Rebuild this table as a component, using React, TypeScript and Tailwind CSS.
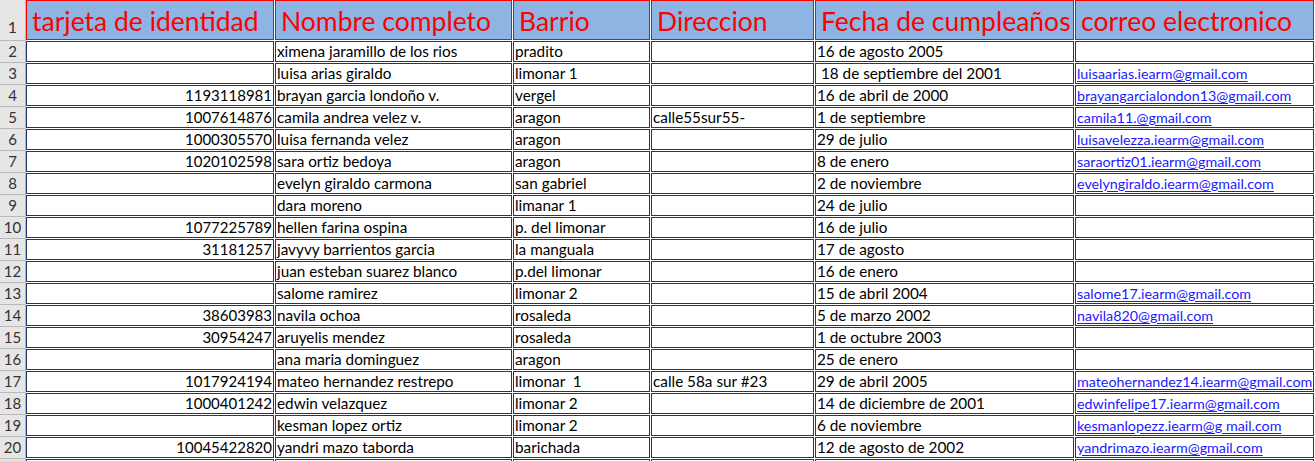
import React from "react";

type Row = [string, string, string, string, string, string];

const rows: Row[] = [
  ["", "ximena jaramillo de los rios", "pradito", "", "16 de agosto 2005", ""],
  ["", "luisa arias giraldo", "limonar 1", "", " 18 de septiembre del 2001", "luisaarias.iearm@gmail.com"],
  ["1193118981", "brayan garcia londoño v.", "vergel", "", "16 de abril de 2000", "brayangarcialondon13@gmail.com"],
  ["1007614876", "camila andrea velez v.", "aragon", "calle55sur55-", "1 de septiembre", "camila11.@gmail.com"],
  ["1000305570", "luisa fernanda velez", "aragon", "", "29 de julio", "luisavelezza.iearm@gmail.com"],
  ["1020102598", "sara ortiz bedoya", "aragon", "", "8 de enero", "saraortiz01.iearm@gmail.com"],
  ["", "evelyn giraldo carmona", "san gabriel", "", "2 de noviembre", "evelyngiraldo.iearm@gmail.com"],
  ["", "dara moreno", "limanar 1", "", "24 de julio", ""],
  ["1077225789", "hellen farina ospina", "p. del limonar", "", "16 de julio", ""],
  ["31181257", "javyvy barrientos garcia", "la manguala", "", "17 de agosto", ""],
  ["", "juan esteban suarez blanco", "p.del limonar", "", "16 de enero", ""],
  ["", "salome ramirez", "limonar 2", "", "15 de abril 2004", "salome17.iearm@gmail.com"],
  ["38603983", "navila ochoa", "rosaleda", "", "5 de marzo 2002", "navila820@gmail.com"],
  ["30954247", "aruyelis mendez", "rosaleda", "", "1 de octubre 2003", ""],
  ["", "ana maria dominguez", "aragon", "", "25 de enero", ""],
  ["1017924194", "mateo hernandez restrepo", "limonar  1", "calle 58a sur #23", "29 de abril 2005", "mateohernandez14.iearm@gmail.com"],
  ["1000401242", "edwin velazquez", "limonar 2", "", "14 de diciembre de 2001", "edwinfelipe17.iearm@gmail.com"],
  ["", "kesman lopez ortiz", "limonar 2", "", "6 de noviembre", "kesmanlopezz.iearm@g mail.com"],
  ["10045422820", "yandri mazo taborda", "barichada", "", "12 de agosto de 2002", "yandrimazo.iearm@gmail.com"],
  ["", "", "", "", "", ""],
];

const widths = ["w-[248px]", "w-[237px]", "w-[137px]", "w-[163px]", "w-[259px]", "w-[239px]"];
const headers = ["tarjeta de identidad", "Nombre completo", "Barrio", "Direccion", "Fecha de cumpleaños", "correo electronico"];

export default function App() {
  return (
    <div
      className="h-[461px] w-[1315px] overflow-hidden bg-white text-black"
      style={{ fontFamily: "Lato, 'Open Sans', sans-serif" }}
    >
      {/* header row */}
      <div className="flex h-[41px]">
        <div className="flex h-full w-[26px] shrink-0 items-end justify-center border-r border-b border-[#b8b8b8] bg-[#e6e6e6] pb-[5px] text-[16px] leading-none text-[#333]">
          1
        </div>
        <div className="flex gap-px">
          {headers.map((h, i) => (
            <div
              key={i}
              className={`${widths[i]} flex h-[40px] shrink-0 items-end whitespace-nowrap border border-[#ff0000] bg-[#8db4e2] pb-[5px] pl-[5px] text-[26.5px] leading-none text-[#ff0000]`}
            >
              {h}
            </div>
          ))}
        </div>
      </div>
      {rows.map((r, ri) => (
        <div key={ri} className="flex h-[22px]">
          <div className="flex h-full w-[26px] shrink-0 items-end justify-center border-r border-b border-[#b8b8b8] bg-[#e6e6e6] pb-[3px] text-[15px] leading-none text-[#333]">
            {ri < 19 ? ri + 2 : ""}
          </div>
          <div className="flex gap-px">
            {r.map((c, ci) => (
              <div
                key={ci}
                className={`${widths[ci]} relative flex h-[21px] shrink-0 items-end whitespace-pre border border-[#1f3864] pb-[2px] leading-none ${
                  ci === 0 ? "justify-end pr-[1px] text-[15px]" : ci === 5 ? "pl-[1px] text-[14.3px]" : "pl-[1px] text-[15.3px]"
                }`}
              >
                {ci === 5 && c ? (
                  <span className="text-[#1a1aff] underline underline-offset-2">{c}</span>
                ) : (
                  c
                )}
              </div>
            ))}
          </div>
        </div>
      ))}
    </div>
  );
}
